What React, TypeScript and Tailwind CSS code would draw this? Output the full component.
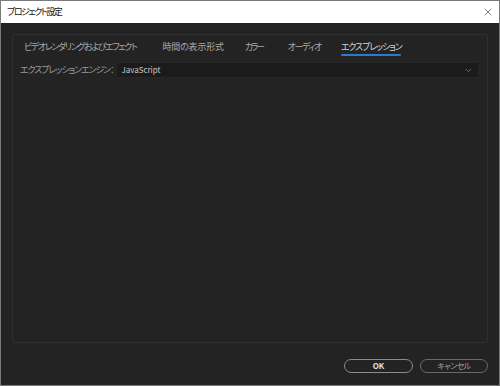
import { ChevronDown, X } from 'lucide-react';

const TABS = [
  { label: 'ビデオレンダリングおよびエフェクト', track: 'tracking-[-1.4px]', gap: '' },
  { label: '時間の表示形式', track: 'tracking-[-0.2px]', gap: 'ml-[26px]' },
  { label: 'カラー', track: 'tracking-[-2.4px]', gap: 'ml-[21px]' },
  { label: 'オーディオ', track: 'tracking-[-1.4px]', gap: 'ml-[25px]' },
  { label: 'エクスプレッション', track: 'tracking-[-1.1px]', gap: 'ml-[20px]' },
];

export default function App() {
  return (
    <div
      className="w-[500px] h-[386px] bg-[#232323] border border-[#7a7a7a] flex flex-col overflow-hidden text-[9px] whitespace-nowrap [font-feature-settings:'palt']"
      style={{ fontFamily: '"Noto Sans CJK JP", "Noto Sans", sans-serif' }}
    >
      {/* Title bar */}
      <div className="h-[22px] bg-white flex items-center justify-between pl-[6px] pr-[5px] shrink-0">
        <span className="text-[#111] text-[9px] tracking-[-1.5px]">プロジェクト設定</span>
        <X size={12} strokeWidth={1.2} className="text-[#222]" />
      </div>

      <div className="flex-1 flex flex-col px-[11px] pt-[11px] pb-[12px]">
        {/* Panel */}
        <div className="flex-1 border border-[#2f2f2f] rounded-[2px] px-[6px] pt-[6px]">
          <div className="flex pl-[5px] items-center">
            {TABS.map((t, i) => (
              <div key={t.label} className={`relative leading-[12px] ${t.gap}`}>
                <span className={`${t.track} ${i === 4 ? 'text-[#d4d4d4]' : 'text-[#a8a8a8]'}`}>{t.label}</span>
                {i === 4 && <div className="absolute left-0 right-[1px] -bottom-[3px] h-[2px] bg-[#2b7ad0] rounded-full" />}
              </div>
            ))}
          </div>

          <div className="flex items-center gap-[3px] mt-[9px]">
            <span className="text-[#9a9a9a] pl-[1px] tracking-[-1.1px]">エクスプレッションエンジン：</span>
            <div className="flex-1 h-[16px] bg-[#1b1b1b] border border-[#262626] flex items-center justify-between pl-[4px] pr-[5px] mr-[2px]">
              <span className="text-[#c8c8c8] text-[8px]">JavaScript</span>
              <ChevronDown size={9} strokeWidth={2} className="text-[#8a8a8a]" />
            </div>
          </div>
        </div>

        {/* Buttons */}
        <div className="flex justify-end gap-[7px] mt-[16px]">
          <button className="w-[69px] h-[14px] rounded-full border-[1.5px] border-[#8c8c8c] text-[#e0e0e0] text-[8px] flex items-center justify-center font-bold">
            OK
          </button>
          <button className="w-[68px] h-[14px] rounded-full border-[1.5px] border-[#6a6a6a] text-[#a0a0a0] text-[8px] tracking-[-0.6px] flex items-center justify-center">
            キャンセル
          </button>
        </div>
      </div>
    </div>
  );
}
